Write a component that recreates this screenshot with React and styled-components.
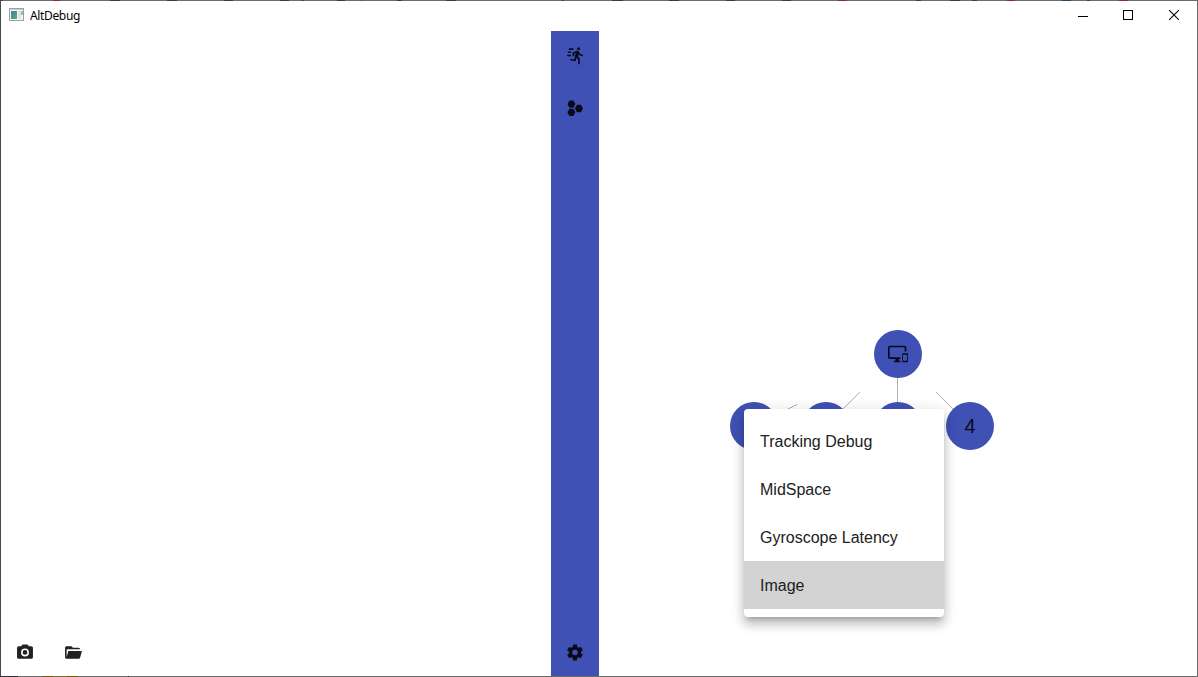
import React from "react";
import styled, { createGlobalStyle } from "styled-components";

const GlobalStyle = createGlobalStyle`
  * { box-sizing: border-box; }
  body { margin: 0; overflow: hidden; background: #fff; }
`;

// [start, end, colour] of the desktop tones showing through the window edge
const topTones = [
  [0, 3, "#7a2f2c"], [53, 60, "#8a302c"], [110, 120, "#3d3a3d"],
  [167, 177, "#3d3a3d"], [224, 233, "#3d3a3d"], [280, 289, "#3d3a3d"],
  [301, 304, "#8a302c"], [337, 345, "#3d3a3d"], [361, 363, "#7a4a2c"],
  [397, 402, "#3d3a3d"], [446, 456, "#3d3a3d"], [499, 502, "#74761f"],
  [562, 564, "#3d3a3d"], [612, 623, "#3d3a3d"], [669, 679, "#3d3a3d"],
  [726, 735, "#3d3a3d"], [782, 791, "#3d3a3d"], [838, 847, "#8a302c"],
  [916, 921, "#1d4a63"], [950, 960, "#3d3a3d"], [972, 977, "#38424d"],
  [1007, 1015, "#8a302c"], [1062, 1071, "#1d4a63"], [1087, 1090, "#3d3a3d"],
  [1119, 1128, "#8a302c"], [1177, 1182, "#8a5a3c"],
];
const bottomTones = [
  [0, 18, "#302e33"], [42, 53, "#7a5410"], [53, 67, "#7d6a45"],
  [67, 78, "#7a5410"], [128, 129, "#302e33"],
];
const edgeGradient = (tones, base) =>
  `linear-gradient(to right, ${tones
    .map(([a, b, c]) => `${base} ${a}px, ${c} ${a}px, ${c} ${b}px, ${base} ${b}px`)
    .join(", ")})`;

const Frame = styled.div`
  width: 1198px;
  height: 677px;
  display: flex;
  flex-direction: column;
  background: #fff;
`;

const Edge = styled.div`
  height: 1px;
  flex: none;
  background: ${(p) => edgeGradient(p.$tones, "#6d6b6e")};
`;

const Window = styled.div`
  flex: 1;
  min-height: 0;
  display: flex;
  flex-direction: column;
  border-left: 1px solid #4a484e;
  border-right: 1px solid #6b6b6d;
  font-family: "Liberation Sans", Arial, sans-serif;
  color: #212121;
`;

const TitleBar = styled.header`
  height: 30px;
  flex: none;
  display: flex;
  align-items: center;
  padding-left: 8px;
`;

const AppIcon = styled.svg`
  width: 16px;
  height: 16px;
  display: block;
  margin-top: -2px;
`;

const Title = styled.span`
  flex: 1;
  margin-left: 5px;
  font: 12px/16px "Noto Sans", "Open Sans", sans-serif;
  letter-spacing: -0.35px;
  color: #000;
`;

const WindowButtons = styled.div`
  display: flex;
`;

const WindowButton = styled.button`
  width: ${(p) => p.$width || 46}px;
  height: 30px;
  padding: 0 0 ${(p) => p.$lift || 0}px 0;
  border: 0;
  background: none;
  display: flex;
  align-items: center;
  justify-content: center;
`;

const Main = styled.main`
  flex: 1;
  min-height: 0;
  display: flex;
`;

const LeftPane = styled.section`
  width: 550px;
  display: flex;
  align-items: flex-end;
`;

const Rail = styled.nav`
  width: 48px;
  background: #3f51b5;
  display: flex;
  flex-direction: column;
`;

const ToolButton = styled.button`
  width: 48px;
  height: 48px;
  padding: 0;
  border: 0;
  background: none;
  color: ${(p) => (p.$onRail ? "#080a17" : "#212121")};
  margin-top: ${(p) => p.$gap || 0};
  display: flex;
  align-items: center;
  justify-content: center;
`;

const IconSvg = styled.svg`
  display: block;
  width: 20px;
  height: 20px;
  fill: currentColor;
`;

const Canvas = styled.section`
  flex: 1;
  position: relative;
`;

const Links = styled.svg`
  position: absolute;
  inset: 0;
  width: 100%;
  height: 100%;
  stroke: #b0b0b0;
  stroke-width: 1;
`;

const Node = styled.div`
  position: absolute;
  left: ${(p) => p.$x - 24}px;
  top: ${(p) => p.$y - 24}px;
  width: 48px;
  height: 48px;
  border-radius: 50%;
  background: #3f51b5;
  color: #080a17;
  display: flex;
  align-items: center;
  justify-content: center;
  font-size: 20px;
`;

const Menu = styled.ul`
  position: absolute;
  left: 145px;
  top: 378px;
  width: 200px;
  margin: 0;
  padding: 8px 0;
  list-style: none;
  background: #fff;
  border-radius: 4px;
  box-shadow: 0 5px 5px -3px rgba(0, 0, 0, 0.2),
    0 8px 10px 1px rgba(0, 0, 0, 0.14), 0 3px 14px 2px rgba(0, 0, 0, 0.12);
`;

const MenuItem = styled.li`
  height: 48px;
  padding: 2px 16px 0;
  display: flex;
  align-items: center;
  font-size: 16px;
  background: ${(p) => (p.$active ? "#d3d3d3" : "transparent")};
`;

const paths = {
  run: "M16.5,5.5A2,2 0 0,0 18.5,3.5A2,2 0 0,0 16.5,1.5A2,2 0 0,0 14.5,3.5A2,2 0 0,0 16.5,5.5M12.9,19.4L13.9,15L16,17V23H18V15.5L15.9,13.5L16.5,10.5C17.89,12.09 19.89,13 22,13V11C20.24,11.03 18.6,10.11 17.7,8.6L16.7,7C16.34,6.4 15.7,6 15,6C14.7,6 14.5,6.1 14.2,6.1L9,8.3V13H11V9.6L12.8,8.9L11.2,17L6.3,16L5.9,18L12.9,19.4M4,9A1,1 0 0,1 3,8A1,1 0 0,1 4,7H7V9H4M5,5A1,1 0 0,1 4,4A1,1 0 0,1 5,3H10V5H5M3,13A1,1 0 0,1 2,12A1,1 0 0,1 3,11H7V13H3Z",
  hexagons: "M5,1.8H10L12.5,6.5L10,11.2H5L2.5,6.5ZM5,12.2H10L12.5,16.9L10,21.6H5L2.5,16.9ZM14.5,7.2H19.5L22,11.9L19.5,16.6H14.5L12,11.9Z",
  cog: "M12,15.5A3.5,3.5 0 0,1 8.5,12A3.5,3.5 0 0,1 12,8.5A3.5,3.5 0 0,1 15.5,12A3.5,3.5 0 0,1 12,15.5M19.43,12.97C19.47,12.65 19.5,12.33 19.5,12C19.5,11.67 19.47,11.34 19.43,11L21.54,9.37C21.73,9.22 21.78,8.95 21.66,8.73L19.66,5.27C19.54,5.05 19.27,4.96 19.05,5.05L16.56,6.05C16.04,5.66 15.5,5.32 14.87,5.07L14.5,2.42C14.46,2.18 14.25,2 14,2H10C9.75,2 9.54,2.18 9.5,2.42L9.13,5.07C8.5,5.32 7.96,5.66 7.44,6.05L4.95,5.05C4.73,4.96 4.46,5.05 4.34,5.27L2.34,8.73C2.21,8.95 2.27,9.22 2.46,9.37L4.57,11C4.53,11.34 4.5,11.67 4.5,12C4.5,12.33 4.53,12.65 4.57,12.97L2.46,14.63C2.27,14.78 2.21,15.05 2.34,15.27L4.34,18.73C4.46,18.95 4.73,19.03 4.95,18.95L7.44,17.94C7.96,18.34 8.5,18.68 9.13,18.93L9.5,21.58C9.54,21.82 9.75,22 10,22H14C14.25,22 14.46,21.82 14.5,21.58L14.87,18.93C15.5,18.67 16.04,18.34 16.56,17.94L19.05,18.95C19.27,19.03 19.54,18.95 19.66,18.73L21.66,15.27C21.78,15.05 21.73,14.78 21.54,14.63L19.43,12.97Z",
  camera: "M4,4H7L9,2H15L17,4H20A2,2 0 0,1 22,6V18A2,2 0 0,1 20,20H4A2,2 0 0,1 2,18V6A2,2 0 0,1 4,4M12,7A5,5 0 0,0 7,12A5,5 0 0,0 12,17A5,5 0 0,0 17,12A5,5 0 0,0 12,7M12,9A3,3 0 0,1 15,12A3,3 0 0,1 12,15A3,3 0 0,1 9,12A3,3 0 0,1 12,9Z",
  folder: "M19,20H4C2.89,20 2,19.1 2,18V6C2,4.89 2.89,4 4,4H10L12,6H19A2,2 0 0,1 21,8H4V18L6.14,10H23.21L20.93,18.5C20.7,19.37 19.92,20 19,20Z",
  devices: "M23,11H18A1,1 0 0,0 17,12V21A1,1 0 0,0 18,22H23A1,1 0 0,0 24,21V12A1,1 0 0,0 23,11M23,20H18V13H23V20M20,2H2C0.89,2 0,2.89 0,4V16A2,2 0 0,0 2,18H9V20H7V22H15V20H13V18H15V16H2V4H20V9H22V4C22,2.89 21.1,2 20,2Z",
};

const Icon = ({ name, box = "-0.6 -1.2 25.2 25.2" }) => (
  <IconSvg viewBox={box} aria-hidden="true">
    <path d={paths[name]} />
  </IconSvg>
);

const menuItems = ["Tracking Debug", "MidSpace", "Gyroscope Latency", "Image"];

export default function App() {
  return (
    <Frame>
      <GlobalStyle />
      <Edge $tones={topTones} />
      <Window>
        <TitleBar>
          <AppIcon viewBox="0 0 16 16">
            <defs>
              <linearGradient id="screen" x1="0" y1="0" x2="1" y2="1">
                <stop offset="0" stopColor="#4a7ba0" />
                <stop offset="1" stopColor="#57ab79" />
              </linearGradient>
            </defs>
            <rect x="0.5" y="1.5" width="14" height="12" fill="#f4f5f6" stroke="#9da1a6" />
            <rect x="1" y="2" width="13" height="1" fill="#c9cdd1" />
            <rect x="2" y="4" width="6" height="8" fill="url(#screen)" />
            <rect x="9" y="4" width="3" height="8" fill="#dfe1e4" />
            <rect x="12" y="4" width="2" height="4" fill="#8fc5a4" />
          </AppIcon>
          <Title>AltDebug</Title>
          <WindowButtons>
            <WindowButton aria-label="Minimize" $width={44}>
              <svg width="10" height="10" shapeRendering="crispEdges"><path d="M0 5.5H10" stroke="#000" /></svg>
            </WindowButton>
            <WindowButton aria-label="Maximize" $lift={2}>
              <svg width="10" height="10" shapeRendering="crispEdges"><rect x=".5" y=".5" width="9" height="9" fill="none" stroke="#000" /></svg>
            </WindowButton>
            <WindowButton aria-label="Close" $lift={2}>
              <svg width="10" height="10"><path d="M0 0L10 10M10 0L0 10" stroke="#000" strokeWidth="1.1" /></svg>
            </WindowButton>
          </WindowButtons>
        </TitleBar>
        <Main>
          <LeftPane>
            <ToolButton><Icon name="camera" /></ToolButton>
            <ToolButton><Icon name="folder" /></ToolButton>
          </LeftPane>
          <Rail>
            <ToolButton $onRail><Icon name="run" /></ToolButton>
            <ToolButton $onRail $gap="5px"><Icon name="hexagons" /></ToolButton>
            <ToolButton $onRail $gap="auto"><Icon name="cog" /></ToolButton>
          </Rail>
          <Canvas>
            <Links>
              <g shapeRendering="crispEdges">
                <path d="M298.5 323V395" />
                <path d="M261 361L227 395" />
                <path d="M337 361L371 395" />
                <path d="M198 373.5L155 395" />
              </g>
            </Links>
            <Node $x={299} $y={323}><Icon name="devices" box="0 0 24 24" /></Node>
            <Node $x={155} $y={395} />
            <Node $x={227} $y={395} />
            <Node $x={299} $y={395} />
            <Node $x={371} $y={395}>4</Node>
            <Menu>
              {menuItems.map((label) => (
                <MenuItem key={label} $active={label === "Image"}>{label}</MenuItem>
              ))}
            </Menu>
          </Canvas>
        </Main>
      </Window>
      <Edge $tones={bottomTones} />
    </Frame>
  );
}
